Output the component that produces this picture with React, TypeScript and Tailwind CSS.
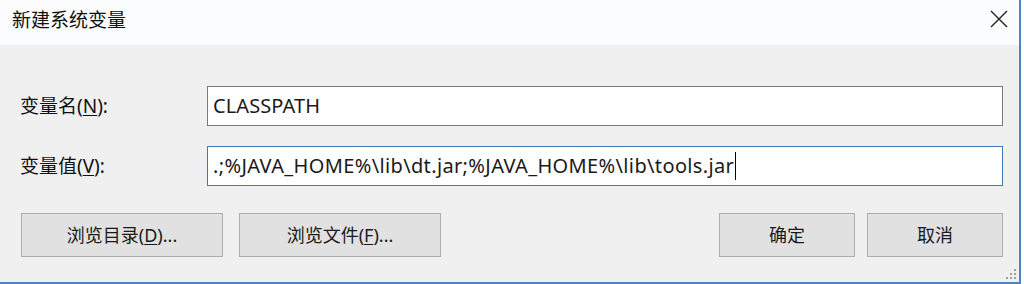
import React from "react";

const font = { fontFamily: '"Noto Sans", "Noto Sans CJK SC", sans-serif' };

function Btn({ children, className }: { children: React.ReactNode; className: string }) {
  return (
    <div
      className={`h-[44px] flex items-center justify-center bg-[#e1e1e1] border border-[#adadad] text-[18px] text-[#1a1a1a] ${className}`}
    >
      {children}
    </div>
  );
}

export default function App() {
  return (
    <div className="w-[1024px] h-[284px] flex bg-[#fbfcfd] overflow-hidden" style={font}>
      <div className="w-[1021px] h-[284px] flex flex-col border-r-2 border-b-2 border-[#4f86bf]">
        <div className="h-[45px] shrink-0 bg-[#fbfcfd] flex items-center justify-between pl-[12px] pr-[11px]">
          <span className="text-[19px] text-[#111] leading-none mt-[-4px]">新建系统变量</span>
          <svg width="18" height="18" viewBox="0 0 18 18" className="mt-[-8px]">
            <path d="M1 1 L17 17 M17 1 L1 17" stroke="#222" strokeWidth="1.4" />
          </svg>
        </div>
        <div className="flex-1 bg-[#f0f0f0] flex flex-col pl-[20px] pr-[16px] pt-[41px] relative">
          <div className="flex items-center h-[40px]">
            <div className="w-[187px] text-[19px] text-[#111]">
              变量名(<span className="underline underline-offset-2">N</span>):
            </div>
            <div className="w-[796px] h-[40px] bg-white border border-[#7a7a7a] flex items-center pl-[5px] text-[20px] tracking-[0.1px] text-[#1a1a1a]">
              CLASSPATH
            </div>
          </div>
          <div className="flex items-center h-[40px] mt-[20px]">
            <div className="w-[187px] text-[19px] text-[#111]">
              变量值(<span className="underline underline-offset-2">V</span>):
            </div>
            <div className="w-[796px] h-[40px] bg-white border border-[#3d7ab8] flex items-center pl-[5px] text-[20px] tracking-[0.36px] text-[#1a1a1a]">
              <span>.;%JAVA_HOME%\lib\dt.jar;%JAVA_HOME%\lib\tools.jar</span>
              <span className="w-[1px] h-[28px] bg-black ml-[1px]" />
            </div>
          </div>
          <div className="flex mt-[27px] h-[44px]">
            <Btn className="w-[202px] ml-[1px]">
              <span>浏览目录(<span className="underline underline-offset-2">D</span>)...</span>
            </Btn>
            <Btn className="w-[202px] ml-[16px]">
              <span>浏览文件(<span className="underline underline-offset-2">F</span>)...</span>
            </Btn>
            <div className="flex-1" />
            <Btn className="w-[136px]">确定</Btn>
            <Btn className="w-[136px] ml-[12px]">取消</Btn>
          </div>
          <svg width="10" height="10" viewBox="0 0 10 10" className="absolute right-[3px] bottom-[3px]">
            <rect x="8" y="0" width="2" height="2" fill="#a0a0a0" />
            <rect x="4" y="4" width="2" height="2" fill="#a0a0a0" />
            <rect x="8" y="4" width="2" height="2" fill="#a0a0a0" />
            <rect x="0" y="8" width="2" height="2" fill="#a0a0a0" />
            <rect x="4" y="8" width="2" height="2" fill="#a0a0a0" />
            <rect x="8" y="8" width="2" height="2" fill="#a0a0a0" />
          </svg>
        </div>
      </div>
    </div>
  );
}
